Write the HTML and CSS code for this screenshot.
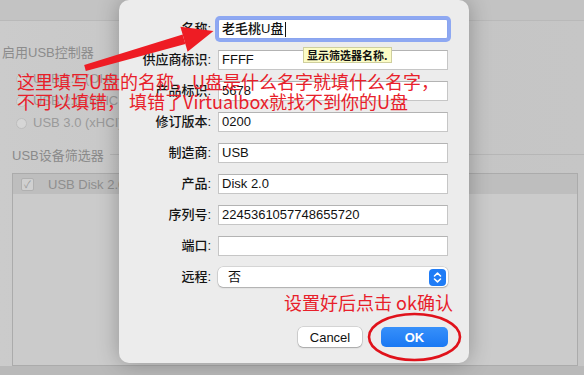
FILE: index.html
```html
<!DOCTYPE html>
<html lang="zh">
<head>
<meta charset="utf-8">
<title>USB筛选器</title>
<link rel="stylesheet" href="styles.css">
</head>
<body>
<div class="window">
  <div class="win-head"></div>
  <div class="win-line enable">启用USB控制器</div>
  <div class="radio-list">
    <div class="radio"><span class="dot"></span>USB 1.1 (OHCI)</div>
    <div class="radio"><span class="dot"></span>USB 2.0 (OHCI + EHCI)</div>
    <div class="radio"><span class="dot"></span>USB 3.0 (xHCI)</div>
  </div>
  <div class="group-head"><span>USB设备筛选器</span><span class="rule"></span></div>
  <div class="filter-box">
    <div class="filter-row"><span class="check">✓</span>USB Disk 2.0</div>
  </div>
</div>

<div class="sheet">
  <div class="form">
    <label class="lbl">名称:</label>
    <div class="field focus">老毛桃U盘<span class="caret"></span></div>
    <label class="lbl">供应商标识:</label>
    <div class="field">FFFF</div>
    <label class="lbl">产品标识:</label>
    <div class="field">5678</div>
    <label class="lbl">修订版本:</label>
    <div class="field">0200</div>
    <label class="lbl">制造商:</label>
    <div class="field">USB</div>
    <label class="lbl">产品:</label>
    <div class="field">Disk 2.0</div>
    <label class="lbl">序列号:</label>
    <div class="field">2245361057748655720</div>
    <label class="lbl">端口:</label>
    <div class="field"></div>
    <label class="lbl">远程:</label>
    <div class="field select">否
      <svg class="stepper" width="17" height="17" viewBox="0 0 17 17"><rect x="0" y="0" width="17" height="17" rx="4" fill="#1f7cf6"/><path d="M5.5 7 L8.5 4.2 L11.5 7" fill="none" stroke="#fff" stroke-width="1.6" stroke-linecap="round" stroke-linejoin="round"/><path d="M5.5 10 L8.5 12.8 L11.5 10" fill="none" stroke="#fff" stroke-width="1.6" stroke-linecap="round" stroke-linejoin="round"/></svg>
    </div>
  </div>
  <div class="buttons">
    <button class="btn cancel">Cancel</button>
    <button class="btn ok">OK</button>
  </div>
</div>

<div class="tooltip">显示筛选器名称.</div>

<svg class="marks" width="584" height="375" viewBox="0 0 584 375">
  <polygon points="84.2,65.1 85.8,70.9 185.4,44.1 182.6,34.5" fill="#ee1c24"/>
  <polygon points="180.4,26.8 213.5,31 187.6,51.8" fill="#ee1c24"/>
  <ellipse cx="414.5" cy="337" rx="45.5" ry="23" fill="none" stroke="#e0121b" stroke-width="2.6"/>
</svg>
<div class="note note-main">这里填写U盘的名称，U盘是什么名字就填什么名字，<br>不可以填错， 填错了Virtualbox就找不到你的U盘</div>
<div class="note note-ok">设置好后点击 ok确认</div>
</body>
</html>
```

FILE: styles.css
```css
html, body {
  margin: 0;
  padding: 0;
}
body {
  width: 584px;
  height: 375px;
  overflow: hidden;
  position: relative;
  background: #b9b9b9;
  font-family: "Liberation Sans", "Noto Sans CJK SC", sans-serif;
}
.window {
  width: 584px;
  height: 366px;
  background: linear-gradient(to right, #cbcbcb 0%, #c4c4c4 60%, #c6c6c6 100%);
  display: flex;
  flex-direction: column;
  color: #8c8c8c;
  font-size: 13px;
}
.win-head {
  height: 20px;
  border-bottom: 1px solid #b9b9b9;
  background: #c3c3c3;
  flex: none;
}
.enable {
  margin-top: 23px;
  padding-left: 2px;
  height: 18px;
  line-height: 18px;
}
.radio-list {
  margin-top: 8px;
  display: flex;
  flex-direction: column;
  gap: 4px;
  padding-left: 16px;
}
.radio {
  height: 18px;
  line-height: 18px;
  display: flex;
  align-items: center;
  gap: 6px;
  color: #9a9a9a;
}
.dot {
  width: 11px;
  height: 11px;
  border-radius: 50%;
  background: #d6d6d6;
  border: 1px solid #bdbdbd;
  box-sizing: border-box;
}
.group-head {
  margin-top: 13px;
  padding-left: 12px;
  display: flex;
  align-items: center;
  gap: 6px;
  height: 18px;
  color: #8a8a8a;
}
.rule {
  flex: 1;
  height: 1px;
  background: #b6b6b6;
}
.filter-box {
  margin: 10px 6px 0 12px;
  height: 193px;
  border: 1px solid #ababab;
  background: #cbcbcb;
}
.filter-row {
  height: 20px;
  background: #bebebe;
  display: flex;
  align-items: center;
  padding-left: 8px;
  gap: 14px;
  color: #8e8e8e;
}
.check {
  width: 11px;
  height: 11px;
  border: 1px solid #b0b0b0;
  background: #d0d0d0;
  border-radius: 2px;
  font-size: 10px;
  line-height: 11px;
  text-align: center;
  color: #999;
}

.sheet {
  position: absolute;
  left: 119px;
  top: 0;
  width: 350px;
  height: 363px;
  background: #ececec;
  border-radius: 10px;
  box-shadow: 0 0 22px rgba(0, 0, 0, 0.28);
  box-sizing: border-box;
  padding-top: 19px;
}
.form {
  display: grid;
  grid-template-columns: 92px 230px;
  grid-auto-rows: 20px;
  column-gap: 7px;
  row-gap: 11px;
}
.lbl {
  text-align: right;
  font-size: 13px;
  line-height: 20px;
  color: #141414;
  font-weight: 500;
  white-space: nowrap;
}
.field {
  background: #fff;
  border: 1px solid #c6c6c6;
  border-top-color: #b3b3b3;
  box-sizing: border-box;
  font-size: 13px;
  line-height: 18px;
  padding-left: 3px;
  color: #111;
  display: flex;
  align-items: center;
}
.field.focus {
  border-color: #8aa4ee;
  border-radius: 2px;
  box-shadow: 0 0 0 3px #8ea8f2;
  font-weight: 500;
}
.caret {
  width: 1px;
  height: 15px;
  background: #111;
  margin-left: 2px;
}
.field.select {
  border: none;
  border-radius: 5px;
  box-shadow: 0 0 0 0.5px rgba(0, 0, 0, 0.18), 0 1px 1.5px rgba(0, 0, 0, 0.2);
  padding-left: 10px;
  justify-content: space-between;
  padding-right: 2px;
}
.stepper {
  display: block;
}
.buttons {
  margin-top: 40px;
  display: flex;
  justify-content: flex-end;
  gap: 19px;
  padding-right: 21px;
}
.btn {
  height: 20px;
  border: none;
  border-radius: 5px;
  font-family: "Liberation Sans", sans-serif;
  font-size: 13px;
  padding: 0;
}
.cancel {
  width: 64px;
  background: #fff;
  color: #111;
  box-shadow: 0 0 0 0.5px rgba(0, 0, 0, 0.2), 0 1px 1.5px rgba(0, 0, 0, 0.22);
}
.ok {
  width: 67px;
  background: linear-gradient(#3790fa, #1a78f3);
  color: #fff;
  font-weight: 600;
}

.tooltip {
  position: absolute;
  left: 303px;
  top: 47px;
  height: 16px;
  padding: 0 3px;
  background: #fcfcc6;
  border: 1px solid #cfcf9e;
  box-sizing: border-box;
  font-family: "Noto Sans CJK SC", sans-serif;
  font-size: 11px;
  line-height: 14px;
  font-weight: 600;
  color: #111;
  white-space: nowrap;
}
.marks {
  position: absolute;
  left: 0;
  top: 0;
  pointer-events: none;
}
.note {
  position: absolute;
  font-family: "Noto Sans CJK SC", sans-serif;
  font-size: 18px;
  color: #e8202a;
  white-space: nowrap;
}
.note-main {
  left: 17px;
  top: 71px;
  line-height: 20px;
}
.note-ok {
  left: 284px;
  top: 290px;
  line-height: 24px;
}
```
